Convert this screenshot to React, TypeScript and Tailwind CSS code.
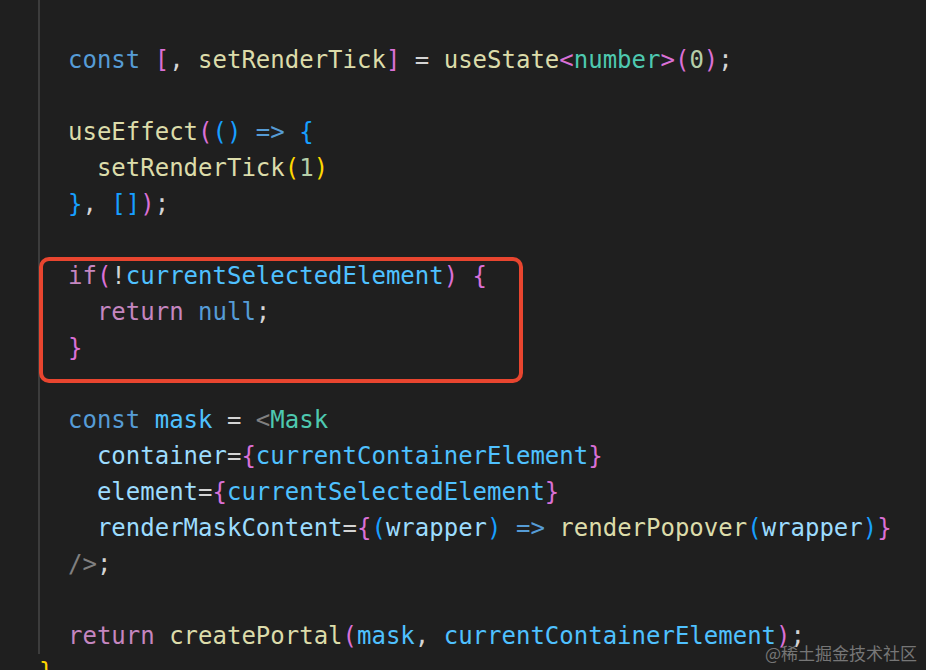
import React from "react";

type Tok = [string, string];

const KW = "text-[#569cd6]";
const CTRL = "text-[#c586c0]";
const FN = "text-[#dcdcaa]";
const VAR = "text-[#9cdcfe]";
const CV = "text-[#4fc1ff]";
const TYPE = "text-[#4ec9b0]";
const NUM = "text-[#b5cea8]";
const P = "text-[#d4d4d4]";
const GOLD = "text-[#ffd700]";
const ORC = "text-[#da70d6]";
const BLU = "text-[#179fff]";
const GRAY = "text-[#808080]";

const lines: Tok[][] = [
  [["const", KW], [" ", P], ["[", ORC], [", ", P], ["setRenderTick", FN], ["]", ORC], [" = ", P], ["useState", FN], ["<", ORC], ["number", TYPE], [">", ORC], ["(", ORC], ["0", NUM], [")", ORC], [";", P]],
  [],
  [["useEffect", FN], ["(", ORC], ["()", BLU], [" ", P], ["=>", KW], [" ", P], ["{", BLU]],
  [["  ", P], ["setRenderTick", FN], ["(", GOLD], ["1", NUM], [")", GOLD]],
  [["}", BLU], [", ", P], ["[]", BLU], [")", ORC], [";", P]],
  [],
  [["if", CTRL], ["(", ORC], ["!", P], ["currentSelectedElement", CV], [")", ORC], [" ", P], ["{", ORC]],
  [["  ", P], ["return", CTRL], [" ", P], ["null", KW], [";", P]],
  [["}", ORC]],
  [],
  [["const", KW], [" ", P], ["mask", CV], [" = ", P], ["<", GRAY], ["Mask", TYPE]],
  [["  ", P], ["container", VAR], ["=", P], ["{", ORC], ["currentContainerElement", CV], ["}", ORC]],
  [["  ", P], ["element", VAR], ["=", P], ["{", ORC], ["currentSelectedElement", CV], ["}", ORC]],
  [["  ", P], ["renderMaskContent", VAR], ["=", P], ["{", ORC], ["(", BLU], ["wrapper", VAR], [")", BLU], [" ", P], ["=>", KW], [" ", P], ["renderPopover", FN], ["(", BLU], ["wrapper", VAR], [")", BLU], ["}", ORC]],
  [["/>", GRAY], [";", P]],
  [],
  [["return", CTRL], [" ", P], ["createPortal", FN], ["(", ORC], ["mask", CV], [", ", P], ["currentContainerElement", CV], [")", ORC], [";", P]],
];

export default function App() {
  return (
    <div
      className="relative w-[926px] h-[670px] overflow-hidden bg-[#1f1f1f] text-[24px] leading-[36px]"
      style={{ fontFamily: '"DejaVu Sans Mono", "Liberation Mono", monospace' }}
    >
      <div className="ml-[38px] border-l-2 border-[#3c3c3c] pt-[42px]">
        {lines.map((l, i) => (
          <div key={i} className="h-[36px] pl-[28px] whitespace-pre">
            {l.map((t, j) => (
              <span key={j} className={t[1]}>
                {t[0]}
              </span>
            ))}
          </div>
        ))}
      </div>
      <div className="pl-[39px] h-[36px] whitespace-pre text-[#ffd700]">{"}"}</div>

      <div className="absolute left-[39px] top-[257px] w-[484px] h-[126px] rounded-[10px] border-4 border-[#e8452f]" />

      <div
        className="absolute right-[9px] bottom-[7px] text-[17px] leading-[20px] text-[#8c8c8c] opacity-80"
        style={{ fontFamily: '"Noto Sans CJK SC", "Noto Sans", sans-serif' }}
      >
        @稀土掘金技术社区
      </div>
    </div>
  );
}
